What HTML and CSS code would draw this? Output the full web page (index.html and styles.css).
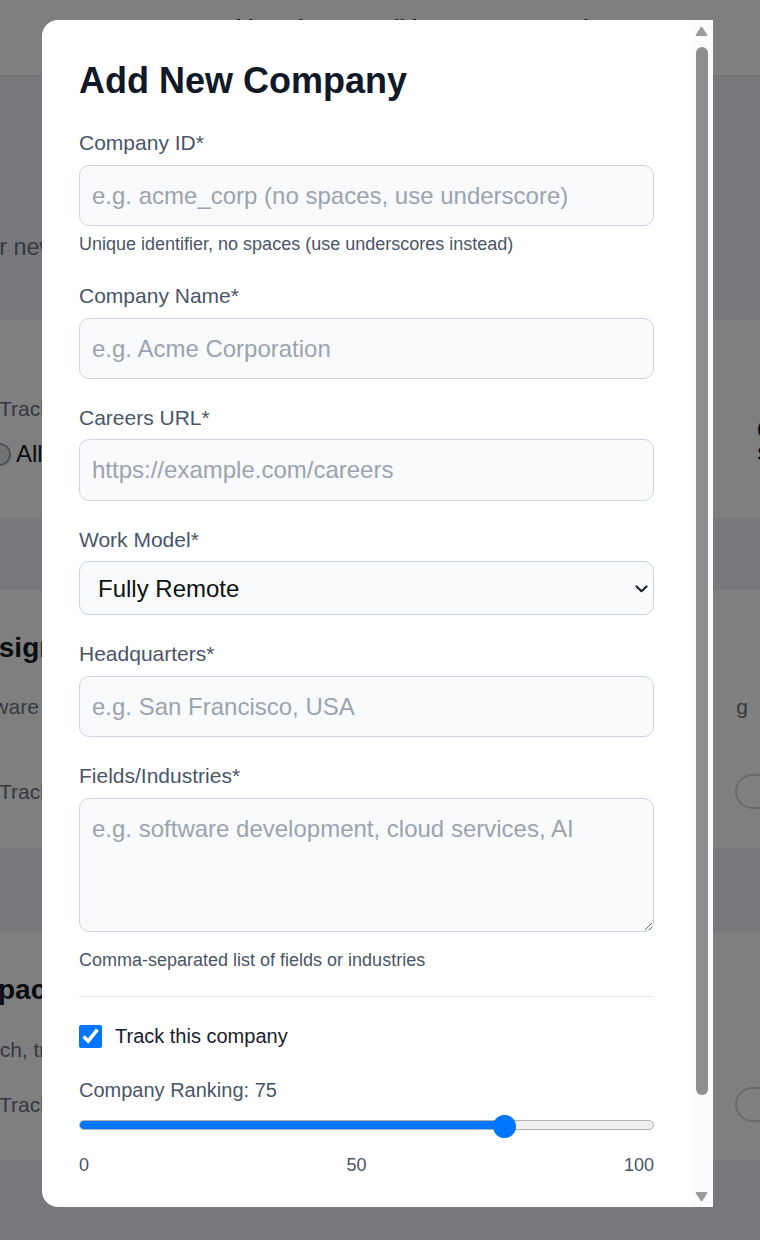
FILE: index.html
```html
<!DOCTYPE html>
<html lang="en">
<head>
<meta charset="utf-8">
<title>Companies – Add New Company</title>
<link rel="stylesheet" href="styles.css">
</head>
<body>
<div class="page">
  <nav class="topnav">
    <a class="nav-link" href="#">Dashboard</a>
    <a class="nav-link" href="#">Candidates</a>
    <a class="nav-link" href="#">Companies</a>
  </nav>
  <header class="intro">
    <p class="intro-sub">Manage companies for new opportunities</p>
  </header>
  <section class="card filter-card">
    <div class="filter-main">
      <p class="filter-label">Tracking status</p>
      <div class="radio-row"><span class="radio-dot"></span><span class="radio-text">All</span></div>
    </div>
    <h3 class="filter-side">Company size</h3>
  </section>
  <article class="card company-card company-first">
    <h2 class="company-name name-design">Design Systems Co.</h2>
    <p class="company-desc"><span class="desc-design">Software consulting for design</span><span>g</span></p>
    <div class="company-foot foot-first"><span class="track-label">Tracked</span><span class="toggle"></span></div>
  </article>
  <article class="card company-card company-second">
    <h2 class="company-name name-alpaca">Alpaca Markets</h2>
    <p class="company-desc"><span class="desc-alpaca">Fintech, trading APIs</span></p>
    <div class="company-foot foot-second"><span class="track-label">Tracked</span><span class="toggle"></span></div>
  </article>
</div>

<div class="overlay">
  <div class="modal">
    <div class="modal-body">
      <h2 class="modal-title">Add New Company</h2>
      <form class="form">
        <div class="field">
          <label class="field-label" for="cid">Company ID*</label>
          <input class="control" id="cid" type="text" placeholder="e.g. acme_corp (no spaces, use underscore)">
          <p class="hint hint-first">Unique identifier, no spaces (use underscores instead)</p>
        </div>
        <div class="field">
          <label class="field-label" for="cname">Company Name*</label>
          <input class="control" id="cname" type="text" placeholder="e.g. Acme Corporation">
        </div>
        <div class="field">
          <label class="field-label" for="curl">Careers URL*</label>
          <input class="control" id="curl" type="text" placeholder="https://example.com/careers">
        </div>
        <div class="field">
          <label class="field-label" for="cmodel">Work Model*</label>
          <div class="select-wrap">
            <select class="control select" id="cmodel">
              <option>Fully Remote</option>
              <option>Hybrid</option>
              <option>On-site</option>
            </select>
            <svg class="chevron" width="13" height="8" viewBox="0 0 13 8" aria-hidden="true"><path d="M1.5 1.5 L6.5 6.2 L11.5 1.5" fill="none" stroke="#1f2329" stroke-width="2.2" stroke-linecap="round" stroke-linejoin="round"/></svg>
          </div>
        </div>
        <div class="field">
          <label class="field-label" for="chq">Headquarters*</label>
          <input class="control" id="chq" type="text" placeholder="e.g. San Francisco, USA">
        </div>
        <div class="field field-last">
          <label class="field-label" for="cfields">Fields/Industries*</label>
          <textarea class="control textarea" id="cfields" placeholder="e.g. software development, cloud services, AI"></textarea>
          <p class="hint hint-after-area">Comma-separated list of fields or industries</p>
        </div>
        <hr class="divider">
        <label class="check-row"><input class="check" type="checkbox" checked><span class="check-text">Track this company</span></label>
        <p class="rank-label">Company Ranking: 75</p>
        <input class="range" type="range" min="0" max="100" value="75">
        <div class="ticks"><span>0</span><span>50</span><span>100</span></div>
        <div class="actions">
          <button class="btn btn-secondary" type="button">Cancel</button>
          <button class="btn btn-primary" type="button">Add Company</button>
        </div>
      </form>
    </div>
    <div class="scrollbar" aria-hidden="true">
      <span class="sb-button sb-up">
        <svg width="13" height="11" viewBox="0 0 13 11"><path d="M6.5 1.6 L11.4 9.2 L1.6 9.2 Z" fill="#9c9c9c" stroke="#9c9c9c" stroke-width="1.8" stroke-linejoin="round"/></svg>
      </span>
      <span class="sb-track"><span class="sb-thumb"></span></span>
      <span class="sb-button sb-down">
        <svg width="13" height="11" viewBox="0 0 13 11"><path d="M1.6 1.8 L11.4 1.8 L6.5 9.4 Z" fill="#9c9c9c" stroke="#9c9c9c" stroke-width="1.8" stroke-linejoin="round"/></svg>
      </span>
    </div>
  </div>
</div>
</body>
</html>
```

FILE: styles.css
```css
* { box-sizing: border-box; }

html, body {
  margin: 0;
  height: 100%;
  overflow: hidden;
}

body {
  font-family: "Liberation Sans", Arial, sans-serif;
  background: #f1eef6;
  color: #1f2937;
}

/* ---------- background page ---------- */
.topnav {
  height: 76px;
  background: #ffffff;
  border-bottom: 1px solid #e5e7eb;
  display: flex;
  align-items: flex-start;
  gap: 46px;
  padding: 16px 0 0 199px;
}
.nav-link {
  font-size: 20px;
  line-height: 23px;
  font-weight: 700;
  color: #1e293b;
  text-decoration: none;
}

.intro {
  height: 244px;
  padding-top: 158px;
}
.intro-sub {
  margin: 0 0 0 -231px;
  font-size: 23.4px;
  line-height: 27px;
  color: #6b7280;
  white-space: nowrap;
}

.card { background: #ffffff; }

.filter-card {
  height: 198px;
  display: flex;
  align-items: flex-start;
  padding-top: 77px;
}
.filter-main {
  flex: none;
  width: 769px;
  margin-left: -12px;
}
.filter-label {
  margin: 0 0 0 11px;
  font-size: 21px;
  line-height: 24px;
  color: #6b7280;
}
.radio-row {
  display: flex;
  align-items: center;
  gap: 5px;
  margin-top: 19px;
}
.radio-dot {
  width: 23px;
  height: 23px;
  border-radius: 50%;
  border: 2px solid #9ca3af;
  background: #e5e7eb;
}
.radio-text {
  font-size: 24px;
  color: #111827;
}
.filter-side {
  flex: none;
  width: 130px;
  margin: 22px 0 0;
  font-size: 28px;
  line-height: 22px;
  font-weight: 700;
  color: #111827;
}

.company-card { padding: 0 12px 0 0; }
.company-first { margin-top: 72px; height: 258px; padding-top: 42px; }
.company-second { margin-top: 84px; height: 228px; padding-top: 42px; }

.company-name {
  margin: 0;
  font-size: 28px;
  line-height: 32px;
  font-weight: 700;
  color: #111827;
  white-space: nowrap;
}
.name-design { margin-left: -37px; }
.name-alpaca { margin-left: -30px; }

.company-desc {
  display: flex;
  justify-content: space-between;
  font-size: 21px;
  line-height: 24px;
  color: #6b7280;
  white-space: nowrap;
}
.company-first .company-desc { margin: 31px 0 0; }
.company-second .company-desc { margin: 32px 0 0; }
.desc-design { margin-left: -44px; }
.desc-alpaca { margin-left: -47px; }

.company-foot {
  display: flex;
  justify-content: space-between;
  align-items: center;
}
.foot-first { margin-top: 55px; }
.foot-second { margin-top: 25px; }
.track-label {
  margin-left: -1px;
  font-size: 21px;
  line-height: 24px;
  color: #6b7280;
}
.toggle {
  width: 64px;
  height: 35px;
  margin-right: -51px;
  border: 2px solid #d4d4d8;
  border-radius: 18px;
  background: #ffffff;
}

/* ---------- modal ---------- */
.overlay {
  position: fixed;
  inset: 0;
  background: rgba(0, 0, 0, 0.5);
  display: flex;
  align-items: flex-start;
  padding: 20px 0 0 42px;
}

.modal {
  display: flex;
  width: 671px;
  height: 1187px;
  overflow: hidden;
  background: #ffffff;
  border-radius: 16px 0 0 16px;
}

.modal-body {
  flex: 1;
  min-width: 0;
  overflow: hidden;
  padding: 40px 39px 40px 37px;
}

/* scrollbar column */
.scrollbar {
  flex: none;
  width: 20px;
  display: flex;
  flex-direction: column;
  background: #fcfcfc;
}
.sb-button {
  flex: none;
  height: 22px;
  display: flex;
  justify-content: flex-start;
  padding-left: 2px;
}
.sb-up { align-items: flex-start; padding-top: 6px; }
.sb-down { align-items: flex-end; padding-bottom: 5px; }
.sb-track {
  flex: 1;
  padding: 5px 5px 0 3px;
}
.sb-thumb {
  display: block;
  width: 12px;
  height: 1048px;
  border-radius: 6px;
  background: #8e8e8e;
}

.modal-title {
  margin: 0 0 30px;
  font-size: 36px;
  line-height: 41px;
  font-weight: 700;
  color: #111827;
}

.form { margin: 0; }

.field { margin-bottom: 26.8px; }
.field-last { margin-bottom: 0; }

.field-label {
  display: block;
  margin-bottom: 9.5px;
  font-size: 21px;
  line-height: 24px;
  color: #4a5568;
}

.control {
  display: block;
  width: 100%;
  margin: 0;
  padding: 16px 12px;
  font-family: "Liberation Sans", Arial, sans-serif;
  font-size: 24px;
  line-height: 27.6px;
  color: #111827;
  background: #f8fafc;
  border: 1px solid #cbd5e1;
  border-radius: 10px;
  outline: none;
}
.control::placeholder { color: #9ca3af; opacity: 1; }

.select-wrap { position: relative; }
.select {
  -webkit-appearance: none;
  appearance: none;
  height: 54px;
  padding: 0 40px 0 18px;
  color: #111111;
}
.chevron {
  position: absolute;
  right: 6px;
  top: 24px;
}

.textarea {
  height: 134px;
  resize: both;
}

.hint {
  margin: 7.5px 0 0;
  font-size: 18px;
  line-height: 20.7px;
  color: #4a5568;
}
.hint-first { padding-bottom: 3px; }
.hint-after-area { margin-top: 18.7px; }

.divider {
  height: 0;
  margin: 25.4px 0 0;
  border: 0;
  border-top: 1px solid #e2e8f0;
}

.check-row {
  display: flex;
  align-items: center;
  gap: 13px;
  margin-top: 28px;
}
.check {
  width: 23px;
  height: 23px;
  margin: 0;
  accent-color: #0075ff;
}
.check-text {
  font-size: 20px;
  line-height: 23px;
  color: #1a202c;
}

.rank-label {
  margin: 31px 0 0;
  font-size: 20px;
  line-height: 23px;
  color: #4a5568;
}

.range {
  -webkit-appearance: none;
  appearance: none;
  display: block;
  width: 100%;
  height: 23px;
  margin: 11.4px 0 0;
  padding: 0;
  background: transparent;
}
.range::-webkit-slider-runnable-track {
  height: 10px;
  border: 1px solid #b2b2b2;
  border-radius: 6px;
  background: linear-gradient(#0075ff, #0075ff) 0 0 / 75% 100% no-repeat border-box, #efefef;
}
.range::-webkit-slider-thumb {
  -webkit-appearance: none;
  appearance: none;
  width: 23px;
  height: 23px;
  margin-top: -6.5px;
  border: none;
  border-radius: 50%;
  background: #0075ff;
}

.ticks {
  display: flex;
  justify-content: space-between;
  margin-top: 18.3px;
  font-size: 18px;
  line-height: 20.7px;
  color: #4a5568;
}

.actions {
  display: flex;
  justify-content: flex-end;
  gap: 12px;
  margin-top: 48px;
}
.btn {
  height: 57px;
  padding: 0 26px;
  font-family: "Liberation Sans", Arial, sans-serif;
  font-size: 20px;
  border-radius: 10px;
  border: 1px solid #cbd5e1;
}
.btn-secondary { background: #ffffff; color: #374151; }
.btn-primary { background: #0075ff; border-color: #0075ff; color: #ffffff; }
```
